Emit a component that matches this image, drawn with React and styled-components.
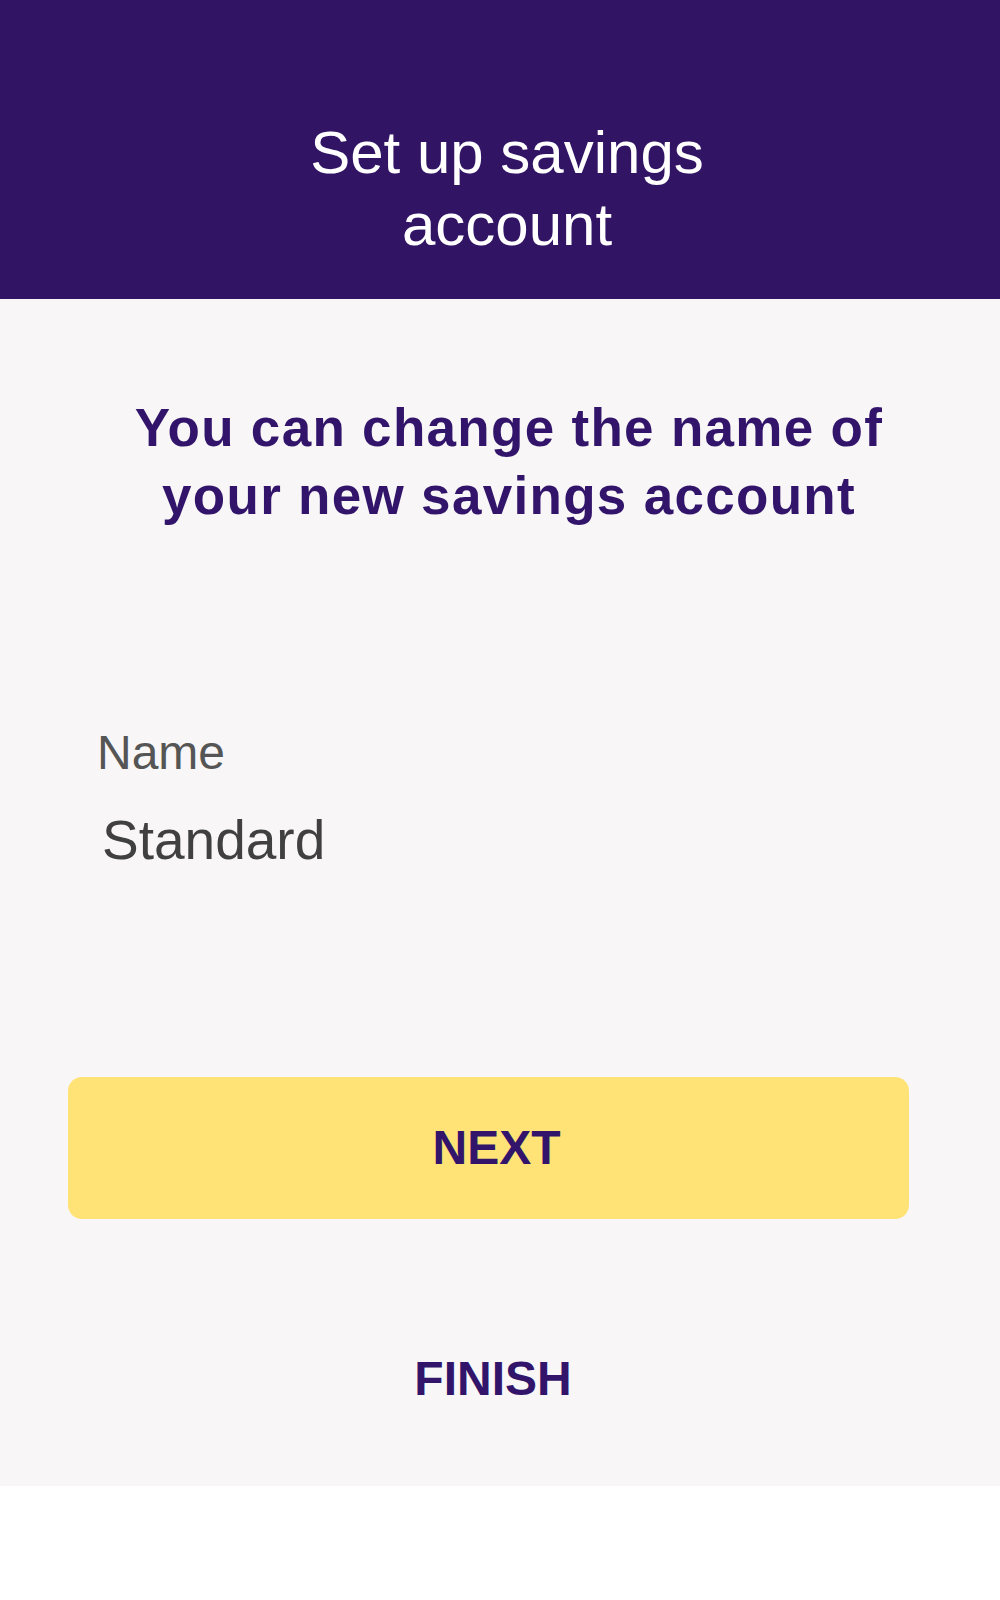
import React from "react";
import styled, { createGlobalStyle } from "styled-components";

const GlobalStyle = createGlobalStyle`
    html, body {
        margin: 0;
        padding: 0;
        background: #ffffff;
        font-family: "Liberation Sans", Arial, sans-serif;
    }
`;

const Page = styled.div`
    width: 1000px;
    display: flex;
    flex-direction: column;
`;

const Header = styled.header`
    height: 299px;
    box-sizing: border-box;
    background: #321465;
    padding: 117px 0 0 14px;
`;

const Title = styled.h1`
    margin: 0;
    color: #ffffff;
    font-weight: 400;
    font-size: 60px;
    line-height: 72px;
    text-align: center;
`;

const Panel = styled.main`
    background: #f8f6f7;
    display: flex;
    flex-direction: column;
    padding: 95px 0 79px;
`;

const Lead = styled.h2`
    margin: 0 0 195px;
    padding-left: 18px;
    color: #32156a;
    font-weight: 700;
    font-size: 53px;
    line-height: 68px;
    letter-spacing: 1.3px;
    text-align: center;
`;

const Field = styled.div`
    display: flex;
    flex-direction: column;
    gap: 27px;
    padding-left: 97px;
    margin-bottom: 205px;
`;

const Label = styled.label`
    color: #555555;
    font-size: 48px;
    line-height: 56px;
`;

const Value = styled.div`
    padding-left: 5px;
    color: #404040;
    font-size: 55px;
    line-height: 64px;
`;

const Button = styled.button`
    border: none;
    cursor: pointer;
    font-family: inherit;
    font-weight: 700;
    font-size: 48px;
    line-height: 56px;
    color: #32156a;
    background: ${(p) => (p.$primary ? "#ffe377" : "transparent")};
    border-radius: 14px;
    padding: 0;
`;

const NextButton = styled(Button)`
    margin-left: 68px;
    width: 841px;
    height: 142px;
    padding-left: 16px;
    margin-bottom: 132px;
`;

const FinishButton = styled(Button)`
    align-self: center;
    margin-left: -14px;
`;

export default function App() {
    return (
        <>
            <GlobalStyle />
            <Page>
                <Header>
                    <Title>
                        Set up savings
                        <br />
                        account
                    </Title>
                </Header>
                <Panel>
                    <Lead>
                        You can change the name of
                        <br />
                        your new savings account
                    </Lead>
                    <Field>
                        <Label>Name</Label>
                        <Value>Standard</Value>
                    </Field>
                    <NextButton $primary>NEXT</NextButton>
                    <FinishButton>FINISH</FinishButton>
                </Panel>
            </Page>
        </>
    );
}
